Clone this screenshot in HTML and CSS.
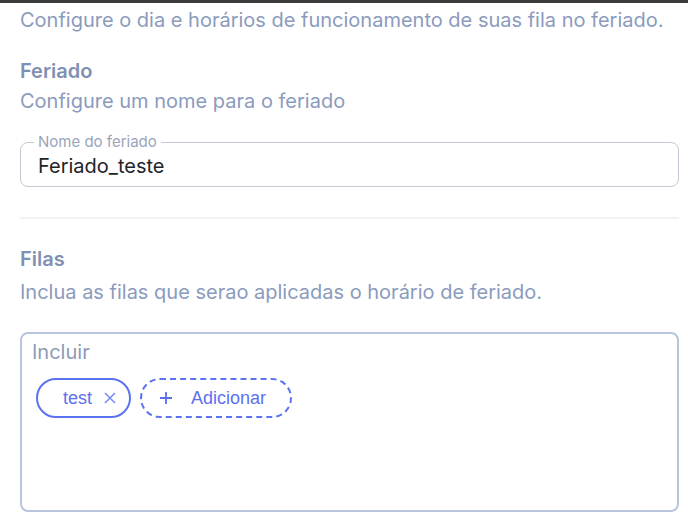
FILE: index.html
```html
<!DOCTYPE html>
<html lang="pt-BR">
<head>
    <meta charset="UTF-8">
    <meta name="viewport" content="width=device-width, initial-scale=1.0">
    <title>Feriado</title>
    <link rel="stylesheet" href="styles.css">
</head>
<body>
    <div class="topbar"></div>
    <div class="content">
        <p class="intro">Configure o dia e horários de funcionamento de suas fila no feriado.</p>

        <section class="group">
            <h3 class="title">Feriado</h3>
            <p class="hint">Configure um nome para o feriado</p>
            <fieldset class="field">
                <legend>Nome do feriado</legend>
                <div class="field-value">Feriado_teste</div>
            </fieldset>
        </section>

        <hr class="divider">

        <section class="group">
            <h3 class="title title-filas">Filas</h3>
            <p class="hint">Inclua as filas que serao aplicadas o horário de feriado.</p>
            <div class="include-box">
                <div class="include-label">Incluir</div>
                <div class="chips">
                    <span class="chip">
                        test
                        <svg class="chip-x" width="12" height="12" viewBox="0 0 12 12">
                            <path d="M1 1 L11 11 M11 1 L1 11" stroke="#7d8cf0" stroke-width="1.6" fill="none"/>
                        </svg>
                    </span>
                    <span class="chip chip-add">
                        <svg class="plus" width="12" height="12" viewBox="0 0 12 12">
                            <path d="M6 0 V12 M0 6 H12" stroke="#5b6ef0" stroke-width="1.8" fill="none"/>
                        </svg>
                        Adicionar
                    </span>
                </div>
            </div>
        </section>
    </div>
</body>
</html>
```

FILE: styles.css
```css
body {
    margin: 0;
    background-color: #fff;
    font-family: Inter, "Noto Sans", sans-serif;
    color: #8b9bbd;
    overflow: hidden;
}

.topbar {
    height: 3px;
    background-color: #3a3a3a;
}

.content {
    padding: 5px 9px 0 20px;
}

p, h3 {
    margin: 0;
    font-size: 20px;
    line-height: 24px;
}

.intro {
    margin-bottom: 27px;
}

.title {
    font-weight: 600;
    color: #7f90b3;
    margin-bottom: 6px;
}

.title-filas {
    margin-bottom: 9px;
}

.field {
    margin: 20px 0 0;
    padding: 3px 17px 8px 17px;
    border: 1px solid #c3c9d5;
    border-radius: 8px;
}

.field legend {
    padding: 0 4px;
    margin-left: -4px;
    font-size: 15px;
    line-height: 18px;
    color: #9aa5ba;
}

.field-value {
    font-size: 20px;
    line-height: 24px;
    color: #1f2329;
}

.divider {
    margin: 30px 0 28px;
    border: none;
    height: 2px;
    background-color: #f1f2f4;
}

.include-box {
    margin-top: 28px;
    box-sizing: border-box;
    height: 180px;
    border: 2px solid #b9c5dc;
    border-radius: 8px;
    padding: 6px 14px 0 10px;
}

.include-label {
    font-size: 20px;
    line-height: 24px;
    color: #8d9bb8;
}

.chips {
    display: flex;
    gap: 9px;
    margin-top: 14px;
    margin-left: 4px;
}

.chip {
    display: inline-flex;
    align-items: center;
    box-sizing: border-box;
    height: 40px;
    padding: 0 13px 0 25px;
    border: 2px solid #5b72f2;
    border-radius: 20px;
    font-family: "Liberation Sans", Arial, sans-serif;
    font-size: 18px;
    color: #5d6ff0;
}

.chip-x {
    margin-left: 12px;
}

.chip-add {
    padding: 0 24px 0 18px;
    border-style: dashed;
}

.plus {
    margin-right: 19px;
}
```
